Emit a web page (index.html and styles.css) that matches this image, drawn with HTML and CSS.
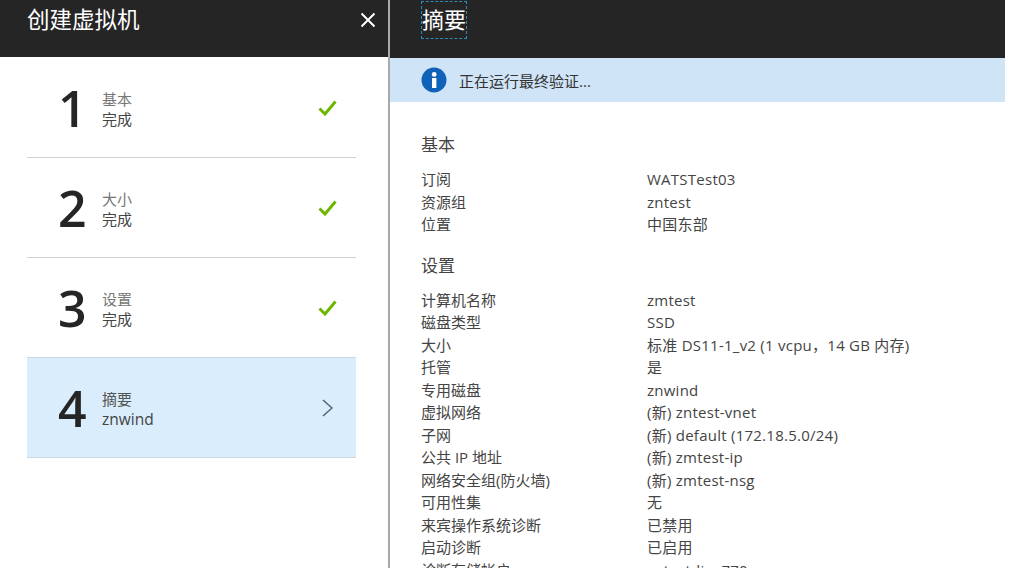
FILE: index.html
```html
<!DOCTYPE html>
<html lang="zh-CN">
<head>
  <meta charset="UTF-8" />
  <title>创建虚拟机</title>
  <link rel="stylesheet" href="styles.css">
</head>
<body>
  <div class="app">
    <section class="wizard">
      <header class="wizard-head">
        <h1>创建虚拟机</h1>
        <svg class="close" width="16" height="16" viewBox="0 0 16 16"><path d="M1.5 1.5l13 13M14.5 1.5l-13 13" stroke="#fff" stroke-width="2" fill="none"/></svg>
      </header>
      <div class="steps">
        <div class="step">
          <span class="num">1</span>
          <div class="step-text"><span class="step-name">基本</span><span class="step-state">完成</span></div>
          <svg class="check" width="19" height="16" viewBox="0 0 19 16"><path d="M1.5 8.5l5.5 5.5L17.5 1.5" stroke="#6bb700" stroke-width="3" fill="none"/></svg>
        </div>
        <div class="step">
          <span class="num">2</span>
          <div class="step-text"><span class="step-name">大小</span><span class="step-state">完成</span></div>
          <svg class="check" width="19" height="16" viewBox="0 0 19 16"><path d="M1.5 8.5l5.5 5.5L17.5 1.5" stroke="#6bb700" stroke-width="3" fill="none"/></svg>
        </div>
        <div class="step">
          <span class="num">3</span>
          <div class="step-text"><span class="step-name">设置</span><span class="step-state">完成</span></div>
          <svg class="check" width="19" height="16" viewBox="0 0 19 16"><path d="M1.5 8.5l5.5 5.5L17.5 1.5" stroke="#6bb700" stroke-width="3" fill="none"/></svg>
        </div>
        <div class="step active">
          <span class="num">4</span>
          <div class="step-text"><span class="step-name">摘要</span><span class="step-state">znwind</span></div>
          <svg class="chevron" width="11" height="18" viewBox="0 0 11 18"><path d="M1 1l9 8-9 8" stroke="#4f6375" stroke-width="1.5" fill="none"/></svg>
        </div>
      </div>
    </section>
    <section class="summary">
      <header class="summary-head"><h2>摘要</h2></header>
      <div class="notice">
        <svg class="info" width="26" height="26" viewBox="0 0 26 26"><circle cx="13" cy="13" r="12.5" fill="#0f62b8"/><rect x="11" y="11" width="4.4" height="10" fill="#fff"/><circle cx="13.2" cy="7.4" r="2.4" fill="#fff"/></svg>
        <span>正在运行最终验证...</span>
      </div>
      <div class="details">
        <h3>基本</h3>
        <dl>
          <dt>订阅</dt><dd>WATSTest03</dd>
          <dt>资源组</dt><dd>zntest</dd>
          <dt>位置</dt><dd>中国东部</dd>
        </dl>
        <h3>设置</h3>
        <dl>
          <dt>计算机名称</dt><dd>zmtest</dd>
          <dt>磁盘类型</dt><dd>SSD</dd>
          <dt>大小</dt><dd>标准 DS11-1_v2 (1 vcpu，14 GB 内存)</dd>
          <dt>托管</dt><dd>是</dd>
          <dt>专用磁盘</dt><dd>znwind</dd>
          <dt>虚拟网络</dt><dd>(新) zntest-vnet</dd>
          <dt>子网</dt><dd>(新) default (172.18.5.0/24)</dd>
          <dt>公共 IP 地址</dt><dd>(新) zmtest-ip</dd>
          <dt>网络安全组(防火墙)</dt><dd>(新) zmtest-nsg</dd>
          <dt>可用性集</dt><dd>无</dd>
          <dt>来宾操作系统诊断</dt><dd>已禁用</dd>
          <dt>启动诊断</dt><dd>已启用</dd>
          <dt>诊断存储帐户</dt><dd>zntestdiag770</dd>
        </dl>
      </div>
    </section>
  </div>
</body>
</html>
```

FILE: styles.css
```css
* { box-sizing: border-box; margin: 0; padding: 0; }
html, body { height: 100%; overflow: hidden; background: #fff; }
body {
  font-family: "Open Sans", "Noto Sans CJK SC", sans-serif;
  color: #3a3a3a;
}
.app {
  width: 1005px;
  height: 568px;
  display: flex;
  overflow: hidden;
}
.wizard {
  width: 390px;
  flex: none;
  border-right: 2px solid #a9a9a9;
}
.wizard-head {
  height: 57px;
  background: #252525;
  color: #fff;
  padding: 6px 12px 0 27px;
  display: flex;
  justify-content: space-between;
  align-items: flex-start;
}
.wizard-head h1 {
  font-size: 22.5px;
  font-weight: 400;
  line-height: 28px;
}
.close { margin-top: 6px; }
.steps { padding: 0 32px 0 27px; }
.step {
  height: 101px;
  margin-top: -1px;
  padding-top: 1px;
  display: flex;
  align-items: center;
  border-bottom: 1px solid #cfcfcf;
  padding-left: 31px;
  padding-right: 19px;
  color: #555;
}
.steps .step:first-child { height: 101px; margin-top: 0; }
.step.active {
  background: #d9edfc;
  border-top: 1px solid #cfd6dc;
  border-bottom: 1px solid #cfd6dc;
  padding-right: 23px;
}
.num {
  width: 44px;
  font-size: 50px;
  font-weight: 600;
  line-height: 56px;
  color: #252525;
  flex: none;
  font-family: "Open Sans", sans-serif;
}
.step-text {
  flex: 1;
  display: flex;
  flex-direction: column;
  font-size: 15px;
  line-height: 20px;
  padding-top: 2px;
}
.step-name { color: #777; }
.step-state { color: #444; }
.step.active .step-name { color: #555; }
.step.active .step-state { font-size: 15.5px; }
.summary { flex: 1; }
.summary-head {
  height: 58px;
  background: #252525;
  padding: 1px 0 0 31px;
}
.summary-head h2 {
  display: inline-block;
  width: 46px;
  height: 38px;
  border: 1px dashed #2b8cb5;
  color: #fff;
  font-size: 22px;
  font-weight: 400;
  line-height: 34px;
  text-align: center;
  white-space: nowrap;
}
.notice {
  height: 44px;
  background: #cfe4f7;
  display: flex;
  align-items: center;
  gap: 12px;
  padding-left: 31px;
  font-size: 15px;
  color: #333;
}
.details { padding: 32px 0 0 31px; font-size: 15px; color: #444; }
.details h3 {
  font-size: 17px;
  font-weight: 400;
  line-height: 22px;
  margin-bottom: 12px;
}
.details dl {
  display: grid;
  grid-template-columns: 226px 1fr;
  grid-auto-rows: 22.5px;
  line-height: 22.5px;
  margin-bottom: 19px;
  white-space: nowrap;
}
.details dd { letter-spacing: 0.25px; }
```
